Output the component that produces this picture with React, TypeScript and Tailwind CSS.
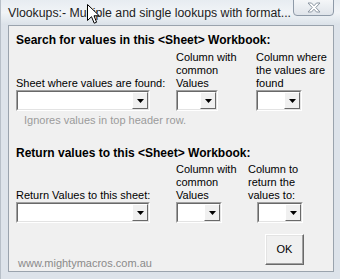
import React from "react";

const font = { fontFamily: '"Liberation Sans", Arial, sans-serif' };

function Combo({ w }: { w: string }) {
  return (
    <div className={`flex h-[21px] ${w} border border-t-[#a0a0a0] border-l-[#a0a0a0] border-b-white border-r-white`}>
      <div className="flex flex-1 justify-end bg-white border border-t-[#696969] border-l-[#696969] border-b-[#e3e3e3] border-r-[#e3e3e3]">
        <div className="flex w-[16px] items-center justify-center bg-[#f0f0f0] border border-t-[#ffffff] border-l-[#ffffff] border-b-[#696969] border-r-[#696969]">
          <svg width="7" height="4" viewBox="0 0 7 4">
            <path d="M0 0H7L3.5 4Z" fill="#000" />
          </svg>
        </div>
      </div>
    </div>
  );
}

function Label({ lines }: { lines: string[] }) {
  return (
    <div className="flex flex-col justify-end h-[39px]">
      {lines.map((l) => (
        <div key={l} className="leading-[13px] whitespace-nowrap">
          {l}
        </div>
      ))}
    </div>
  );
}

export default function App() {
  return (
    <div
      className="flex h-[279px] w-[340px] flex-col bg-[#dde3ea] border-l border-[#b7bfc8] text-[11px] text-black"
      style={font}
    >
      {/* title bar */}
      <div className="relative flex h-[25px] justify-between bg-gradient-to-b from-[#e7ecf1] via-[#f1f4f7] to-[#dbe2e9]">
        <div className="pl-[7px] pt-[5px] leading-[16px] text-[12.3px] text-[#222] whitespace-nowrap">
          Vlookups:- Multiple and single lookups with format...
        </div>
        <div className="mr-[6px] -mt-[1px] flex h-[17px] w-[41px] items-center justify-center rounded-b-[4px] border border-[#8e9aa8] bg-gradient-to-b from-[#f4f6f8] to-[#dfe4ea]">
          <svg width="14" height="11" viewBox="0 0 14 11">
            <path
              d="M1 1H4.5L7 3.8L9.5 1H13L8.8 5.5L13 10H9.5L7 7.2L4.5 10H1L5.2 5.5Z"
              fill="#fff"
              stroke="#8d97a3"
              strokeWidth="1"
              strokeLinejoin="round"
            />
          </svg>
        </div>
        <svg className="absolute left-[86px] top-[4px]" width="13" height="21" viewBox="0 0 13 21">
          <path d="M0.5 0.5V16.5L4.5 12.7L7.2 19.2L9.6 18.2L7 11.8H12.3Z" fill="#fff" stroke="#000" strokeWidth="1" strokeLinejoin="round" />
        </svg>
      </div>

      {/* body */}
      <div className="flex flex-1">
        <div className="w-[7px]" />
        <div className="flex flex-1 flex-col border border-[#9aa3ad] bg-[#f0f0f0] pl-[7px] pt-[8px]">
          <div className="font-bold text-[12px] leading-[13px] whitespace-nowrap">
            Search for values in this &lt;Sheet&gt; Workbook:
          </div>
          <div className="mt-[4px] flex">
            <div className="flex w-[160px] flex-col">
              <Label lines={["Sheet where values are found:"]} />
              <Combo w="w-[134px]" />
            </div>
            <div className="flex w-[80px] flex-col">
              <Label lines={["Column with", "common", "Values"]} />
              <Combo w="w-[42px]" />
            </div>
            <div className="flex flex-col">
              <Label lines={["Column where", "the values are", "found"]} />
              <Combo w="w-[46px]" />
            </div>
          </div>
          <div className="mt-[3px] pl-[8px] leading-[13px] text-[#9b9b9b]">
            Ignores values in top header row.
          </div>

          <div className="mt-[20px] font-bold text-[12px] leading-[13px] whitespace-nowrap">
            Return values to this &lt;Sheet&gt; Workbook:
          </div>
          <div className="mt-[3px] flex">
            <div className="flex w-[160px] flex-col">
              <Label lines={["Return Values to this sheet:"]} />
              <Combo w="w-[134px]" />
            </div>
            <div className="flex w-[72px] flex-col">
              <Label lines={["Column with", "common", "Values"]} />
              <Combo w="w-[46px]" />
            </div>
            <div className="flex flex-col">
              <Label lines={["Column to", "return the", "values to:"]} />
              <div className="ml-[9px]">
                <Combo w="w-[46px]" />
              </div>
            </div>
          </div>

          <div className="flex flex-1 items-end justify-between pr-[29px]">
            <div className="pl-[2px] pb-[1px] leading-[13px] text-[#8a8a8a]">www.mightymacros.com.au</div>
            <div className="mb-[6px] flex h-[31px] w-[39px] items-center justify-center border border-t-white border-l-white border-b-[#696969] border-r-[#696969] bg-[#f0f0f0] shadow-[inset_-1px_-1px_0_#a0a0a0,inset_1px_1px_0_#e3e3e3]">
              OK
            </div>
          </div>
        </div>
        <div className="w-[6px]" />
      </div>
      <div className="h-[7px]" />
    </div>
  );
}
